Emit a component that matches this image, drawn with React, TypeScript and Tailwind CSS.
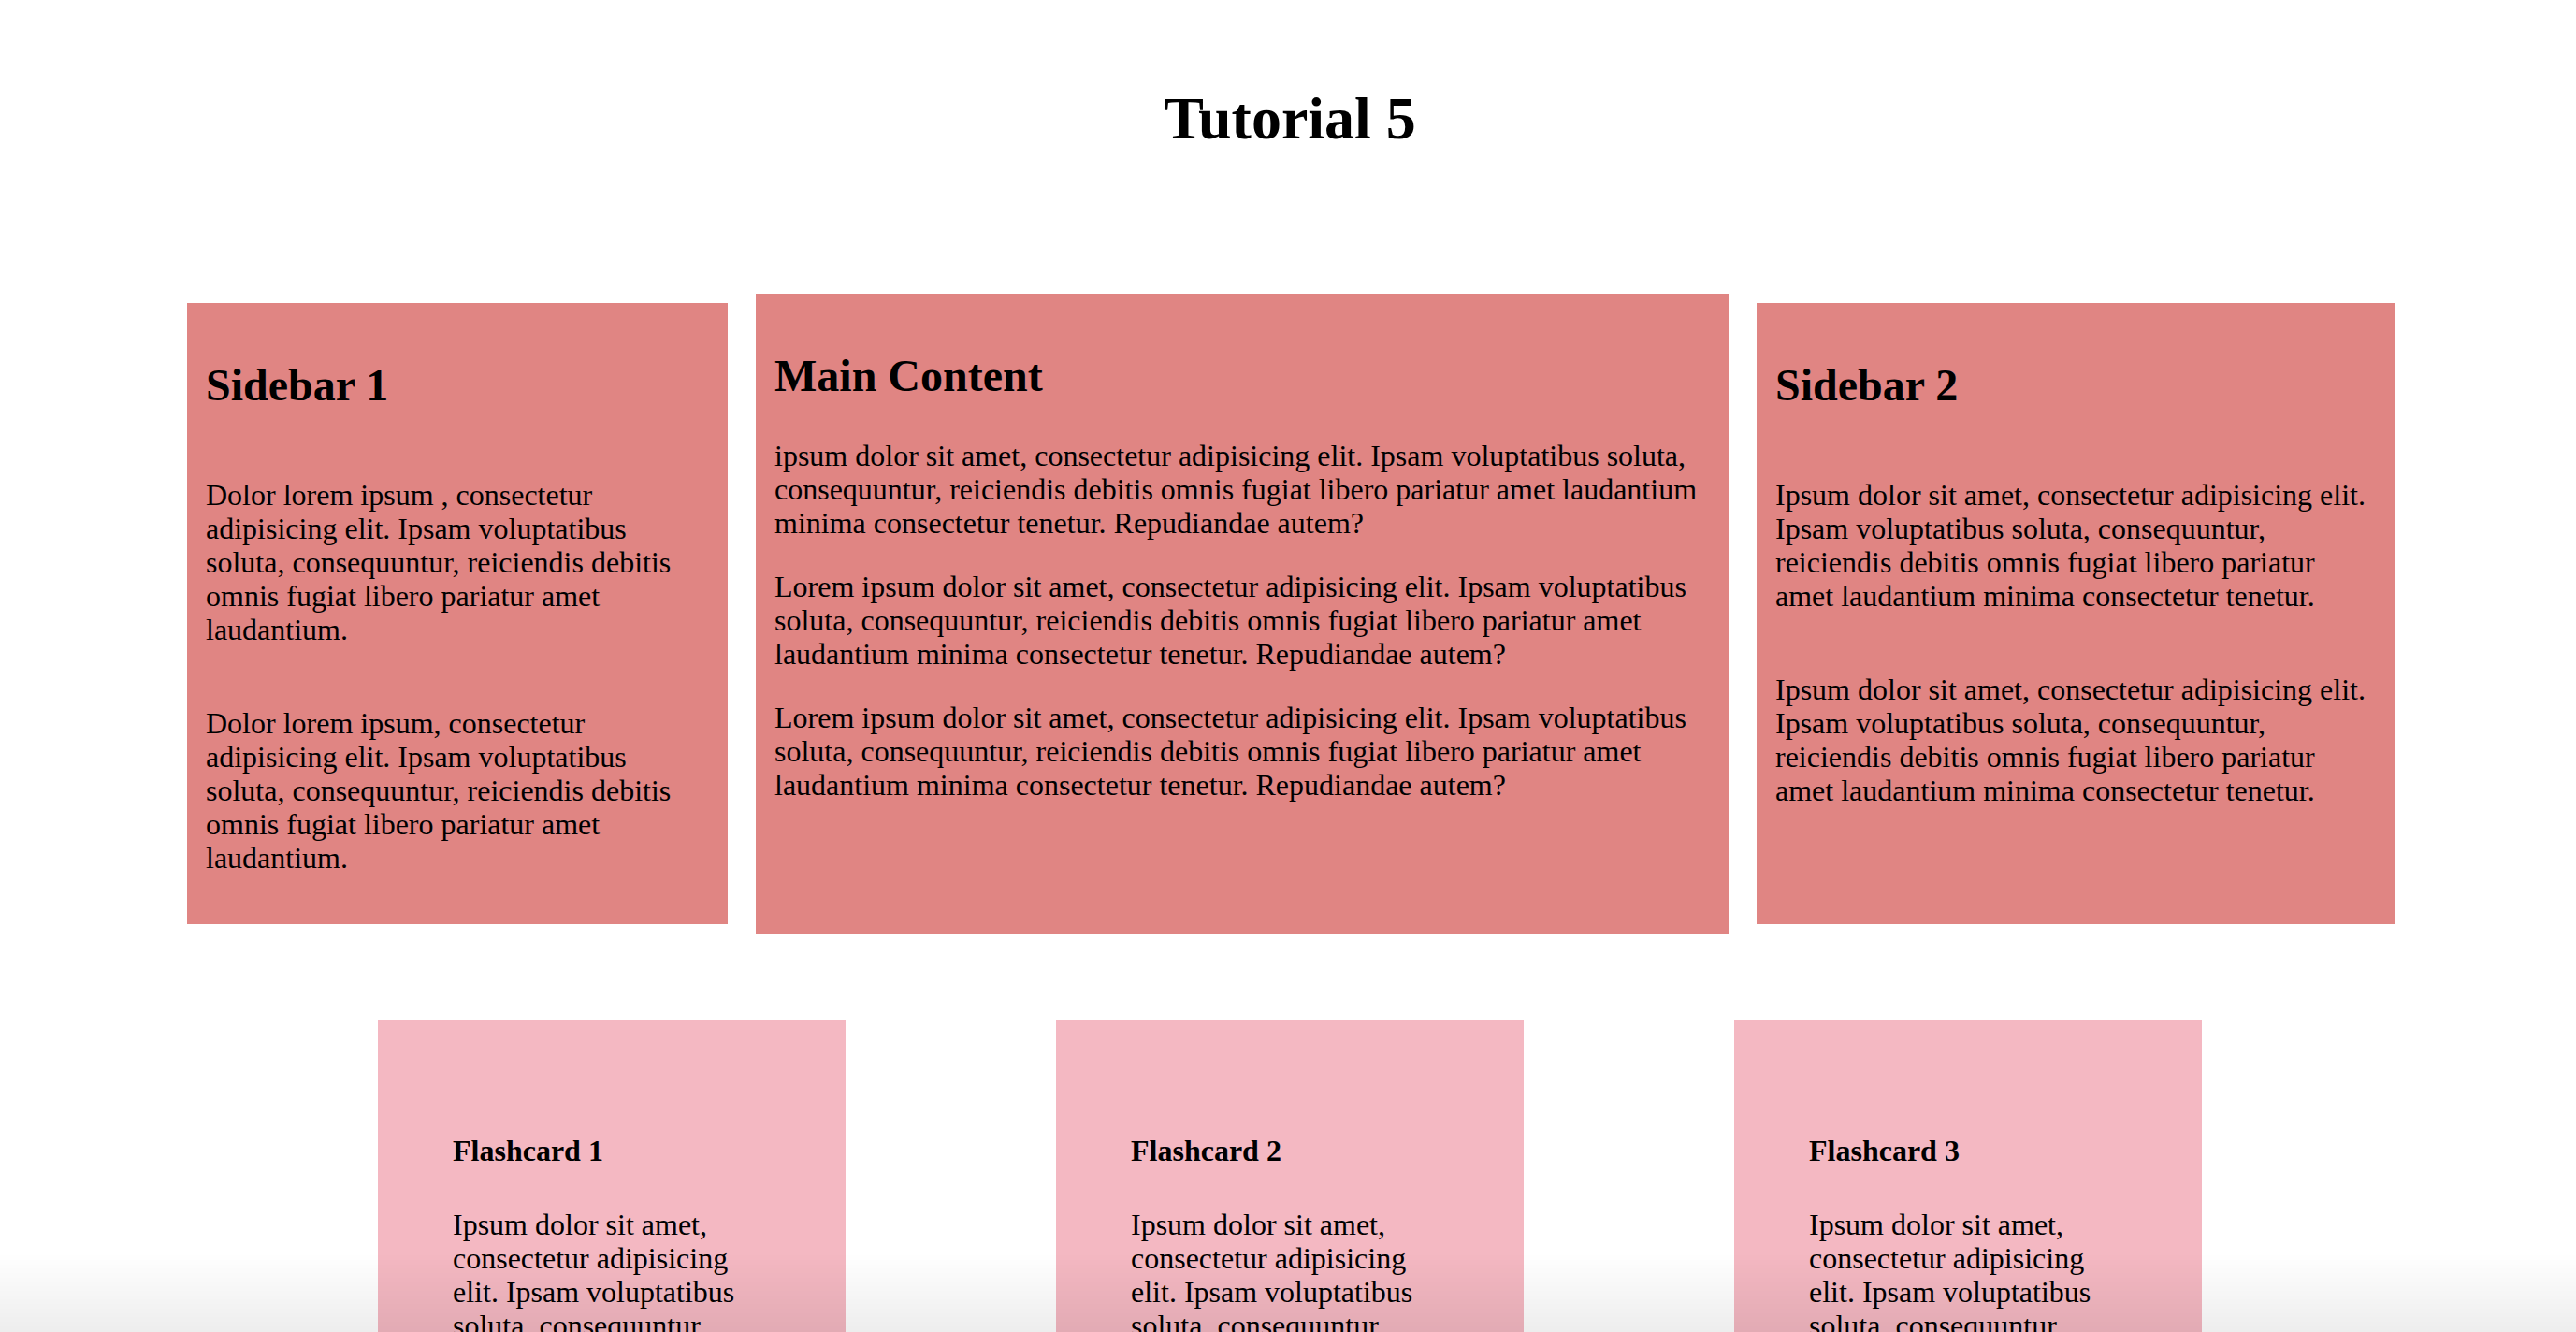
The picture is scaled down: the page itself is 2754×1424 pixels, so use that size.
const serif = { fontFamily: '"Liberation Serif", "Times New Roman", Times, serif' };

function Sidebar({ title, paras, className }: { title: string; paras: string[]; className: string }) {
  return (
    <aside className={`bg-[#e08583] h-[664px] px-[20px] pt-[20px] shrink-0 ${className}`}>
      <h2 className="text-[48px] leading-[55px] font-bold mt-[40px] mb-[72px]">{title}</h2>
      {paras.map((p, i) => (
        <p key={i} className="mb-[64px]">
          {p}
        </p>
      ))}
    </aside>
  );
}

function Flashcard({ n }: { n: number }) {
  return (
    <div className="w-[500px] bg-[#f4b8c2] px-[80px] pt-[80px] pb-[80px]">
      <h4 className="text-[32px] leading-[37px] font-bold mt-[42px] mb-[42px]">Flashcard {n}</h4>
      <p>
        Ipsum dolor sit amet, consectetur adipisicing elit. Ipsam voluptatibus soluta, consequuntur reiciendis
        debitis omnis fugiat libero pariatur amet laudantium.
      </p>
    </div>
  );
}

const mainText =
  'Lorem ipsum dolor sit amet, consectetur adipisicing elit. Ipsam voluptatibus soluta, consequuntur, reiciendis debitis omnis fugiat libero pariatur amet laudantium minima consectetur tenetur. Repudiandae autem?';

export default function App() {
  return (
    <div style={serif} className="min-h-screen bg-white text-black text-[32px] leading-[36px] pb-[120px]">
      <h1 className="text-center text-[64px] leading-[74px] font-bold pt-[90px] pl-[4px]">Tutorial 5</h1>

      {/* top row */}
      <div className="flex items-center gap-[30px] pl-[200px] mt-[150px]">
        <Sidebar
          className="w-[578px]"
          title="Sidebar 1"
          paras={[
            'Dolor lorem ipsum , consectetur adipisicing elit. Ipsam voluptatibus soluta, consequuntur, reiciendis debitis omnis fugiat libero pariatur amet laudantium.',
            'Dolor lorem ipsum, consectetur adipisicing elit. Ipsam voluptatibus soluta, consequuntur, reiciendis debitis omnis fugiat libero pariatur amet laudantium.',
          ]}
        />
        <main className="w-[1040px] h-[684px] bg-[#e08583] px-[20px] pt-[20px] shrink-0">
          <h2 className="text-[48px] leading-[55px] font-bold mt-[40px] mb-[40px]">Main Content</h2>
          <p className="mb-[32px]">
            ipsum dolor sit amet, consectetur adipisicing elit. Ipsam voluptatibus soluta, consequuntur, reiciendis
            debitis omnis fugiat libero pariatur amet laudantium minima consectetur tenetur. Repudiandae autem?
          </p>
          <p className="mb-[32px]">{mainText}</p>
          <p>{mainText}</p>
        </main>
        <Sidebar
          className="w-[682px]"
          title="Sidebar 2"
          paras={[
            'Ipsum dolor sit amet, consectetur adipisicing elit. Ipsam voluptatibus soluta, consequuntur, reiciendis debitis omnis fugiat libero pariatur amet laudantium minima consectetur tenetur.',
            'Ipsum dolor sit amet, consectetur adipisicing elit. Ipsam voluptatibus soluta, consequuntur, reiciendis debitis omnis fugiat libero pariatur amet laudantium minima consectetur tenetur.',
          ]}
        />
      </div>

      {/* flashcards */}
      <div className="flex justify-center gap-[225px] mt-[92px] pl-[4px]">
        <Flashcard n={1} />
        <Flashcard n={2} />
        <Flashcard n={3} />
      </div>

      {/* bottom shade */}
      <div className="fixed inset-x-0 bottom-0 h-[84px] bg-linear-to-b from-transparent to-black/[0.07] pointer-events-none" />
    </div>
  );
}
